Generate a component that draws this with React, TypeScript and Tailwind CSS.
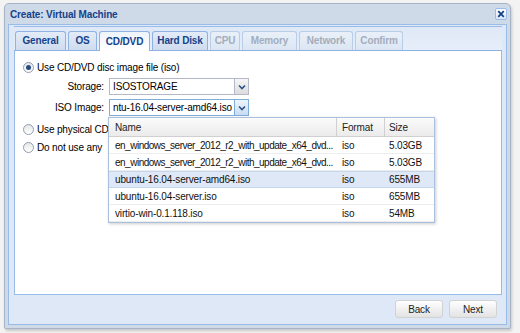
import React from "react";

const font = { fontFamily: '"Liberation Sans", Arial, sans-serif' };

function Chevron() {
  return (
    <svg width="8" height="6" viewBox="0 0 8 6">
      <polyline points="1,1.5 4,4.5 7,1.5" fill="none" stroke="#2f4f86" strokeWidth="1.6" />
    </svg>
  );
}

function Combo({ value, focused }: { value: string; focused?: boolean }) {
  return (
    <div
      className={`flex w-[140px] h-[17px] border ${focused ? "border-[#7eadd9]" : "border-[#b5b8c8]"} bg-white`}
    >
      <div className="flex-1 overflow-hidden whitespace-nowrap pl-[3px] leading-[15px] text-[10px] text-black">
        {value}
      </div>
      <div
        className={`w-[14px] flex items-center justify-center border-l ${focused ? "border-[#7eadd9] bg-gradient-to-b from-[#eef5fd] to-[#c9dcf3]" : "border-[#b5b8c8] bg-gradient-to-b from-[#f6f6f6] to-[#dcdcdc]"}`}
      >
        <Chevron />
      </div>
    </div>
  );
}

function Radio({ checked }: { checked?: boolean }) {
  return (
    <div className="w-[11px] h-[11px] rounded-full border border-[#8f9db3] bg-gradient-to-b from-[#e6e6e6] to-white flex items-center justify-center shrink-0">
      {checked && <div className="w-[5px] h-[5px] rounded-full bg-[#254a82]" />}
    </div>
  );
}

const tabs = [
  { label: "General", w: "w-[51px]", state: "normal" },
  { label: "OS", w: "w-[29px]", state: "normal" },
  { label: "CD/DVD", w: "w-[51px]", state: "active" },
  { label: "Hard Disk", w: "w-[56px]", state: "normal" },
  { label: "CPU", w: "w-[30px]", state: "disabled" },
  { label: "Memory", w: "w-[55px]", state: "disabled" },
  { label: "Network", w: "w-[54px]", state: "disabled" },
  { label: "Confirm", w: "w-[48px]", state: "disabled" },
];

const rows = [
  { name: "en_windows_server_2012_r2_with_update_x64_dvd...", fmt: "iso", size: "5.03GB", long: true },
  { name: "en_windows_server_2012_r2_with_update_x64_dvd...", fmt: "iso", size: "5.03GB", long: true },
  { name: "ubuntu-16.04-server-amd64.iso", fmt: "iso", size: "655MB", sel: true },
  { name: "ubuntu-16.04-server.iso", fmt: "iso", size: "655MB" },
  { name: "virtio-win-0.1.118.iso", fmt: "iso", size: "54MB" },
];

export default function App() {
  return (
    <div
      className="w-[520px] h-[333px] bg-[#f3f3f3] overflow-hidden pl-[4px] pt-[3px] tracking-[-0.15px]"
      style={font}
    >
      <div className="w-[507px] h-[326px] rounded-t-[5px] rounded-b-[2px] border border-[#a7b4c6] bg-[#cfdae8] shadow-[1px_2px_3px_rgba(0,0,0,0.18)] flex flex-col">
        {/* title bar */}
        <div className="h-[20px] flex items-center justify-between pl-[5px] pr-[3px] shrink-0">
          <div className="text-[10px] font-bold text-[#15428b] leading-none pt-[1px]">Create: Virtual Machine</div>
          <div className="w-[12px] h-[12px] rounded-[2px] border border-[#99bbe8] bg-gradient-to-b from-white to-[#dbe6f4] flex items-center justify-center">
            <svg width="8" height="8" viewBox="0 0 8 8">
              <path d="M1.2 1.2 L6.8 6.8 M6.8 1.2 L1.2 6.8" stroke="#15428b" strokeWidth="1.8" />
            </svg>
          </div>
        </div>
        {/* frame */}
        <div className="flex-1 mx-[3px] mb-[3px] border border-[#99bbe8] bg-[#dfe8f6] flex flex-col pl-[5px] pr-[4px] pt-[1px]">
          {/* tab panel */}
          <div className="flex flex-col h-[269px]">
            <div className="h-[25px] border-t border-[#99bbe8] bg-gradient-to-b from-[#dfe8f6] to-[#e6eef9] flex items-end pl-[1px] gap-[2px] border-b border-b-[#8db2e3] relative">
              {tabs.map((t) => {
                const active = t.state === "active";
                const disabled = t.state === "disabled";
                return (
                  <div
                    key={t.label}
                    className={`${t.w} ${active ? "h-[20px] -mb-px bg-gradient-to-b from-[#eef4fc] to-white border-[#8db2e3]" : disabled ? "h-[19px] bg-gradient-to-b from-[#e9f0f9] to-[#dce6f3] border-[#b8cde8]" : "h-[19px] bg-gradient-to-b from-[#e3ecf8] to-[#cfdcee] border-[#8db2e3]"} border border-b-0 rounded-t-[3px] flex items-center justify-center text-[10px] font-bold ${disabled ? "text-[#a3adbb]" : "text-[#15428b]"} leading-none`}
                  >
                    {t.label}
                  </div>
                );
              })}
            </div>
            <div className="flex-1 bg-white border border-t-0 border-[#99bbe8] relative text-[10px] text-black">
              <div className="flex flex-col pl-[8px] pt-[8px]">
                <div className="h-[16px] flex items-center gap-[3px]">
                  <Radio checked />
                  <span>Use CD/DVD disc image file (iso)</span>
                </div>
                <div className="h-[17px] mt-[3px] flex items-center">
                  <div className="w-[86px] text-right pr-[5px]">Storage:</div>
                  <Combo value="ISOSTORAGE" />
                </div>
                <div className="h-[17px] mt-[4px] flex items-center">
                  <div className="w-[86px] text-right pr-[5px]">ISO Image:</div>
                  <Combo value="ntu-16.04-server-amd64.iso" focused />
                </div>
                <div className="h-[16px] mt-[5px] flex items-center gap-[3px]">
                  <Radio />
                  <span>Use physical CD/</span>
                </div>
                <div className="h-[16px] mt-[2px] flex items-center gap-[3px]">
                  <Radio />
                  <span>Do not use any</span>
                </div>
              </div>
              {/* dropdown */}
              <div className="absolute left-[93px] top-[66px] w-[327px] border border-[#a9c0de] bg-white shadow-[1px_1px_3px_rgba(0,0,0,0.2)]">
                <div className="h-[19px] flex bg-gradient-to-b from-[#fbfbfb] to-[#ebebeb] border-b border-[#d0d0d0] text-[#222]">
                  <div className="w-[228px] border-r border-[#d0d0d0] pl-[6px] flex items-center">Name</div>
                  <div className="w-[48px] border-r border-[#d0d0d0] pl-[5px] flex items-center">Format</div>
                  <div className="flex-1 pl-[4px] flex items-center">Size</div>
                </div>
                {rows.map((r, i) => (
                  <div
                    key={i}
                    className={`h-[17px] flex items-center border-b ${r.sel ? "bg-[#dfe8f6] border-[#c5d5ea] border-t" : "border-[#ededed]"} text-[#111]`}
                  >
                    <div className={`w-[228px] pl-[6px] whitespace-nowrap overflow-hidden ${r.long ? "tracking-[-0.5px]" : ""}`}>{r.name}</div>
                    <div className="w-[48px] pl-[5px]">{r.fmt}</div>
                    <div className="flex-1 pl-[4px]">{r.size}</div>
                  </div>
                ))}
              </div>
            </div>
          </div>
          {/* footer */}
          <div className="flex justify-end gap-[6px] pt-[5px] pr-[5px]">
            {["Back", "Next"].map((b) => (
              <div
                key={b}
                className="w-[48px] h-[18px] rounded-[3px] border border-[#d2d2d2] bg-gradient-to-b from-white to-[#e3e3e3] flex items-center justify-center text-[10px] text-[#222]"
              >
                {b}
              </div>
            ))}
          </div>
        </div>
      </div>
    </div>
  );
}
